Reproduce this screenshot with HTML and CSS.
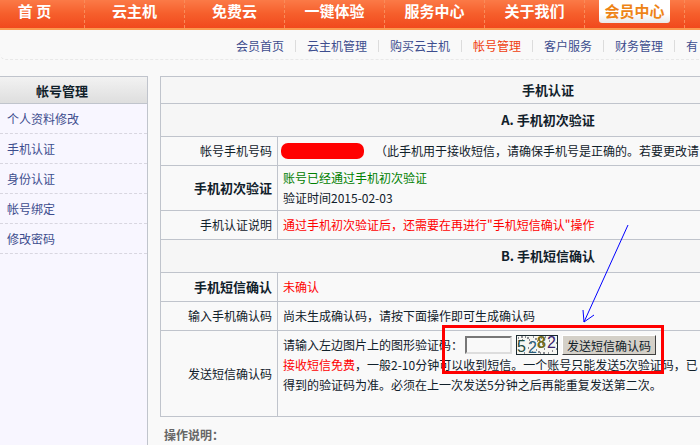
FILE: index.html
```html
<!DOCTYPE html>
<html lang="zh-CN">
<head>
<meta charset="utf-8">
<title>手机认证</title>
<link rel="stylesheet" href="styles.css">
</head>
<body>
<nav class="topnav">
  <a class="tn">首 页</a>
  <a class="tn">云主机</a>
  <a class="tn">免费云</a>
  <a class="tn">一键体验</a>
  <a class="tn">服务中心</a>
  <a class="tn">关于我们</a>
  <a class="tn active"><span>会员中心</span></a>
</nav>
<div class="subnav">
  <a>会员首页</a><a>云主机管理</a><a>购买云主机</a><a class="cur">帐号管理</a><a>客户服务</a><a>财务管理</a><a class="last">有</a>
</div>
<div class="page">
  <aside class="side">
    <h3>帐号管理</h3>
    <a>个人资料修改</a>
    <a>手机认证</a>
    <a>身份认证</a>
    <a>帐号绑定</a>
    <a>修改密码</a>
  </aside>
  <main class="main">
    <table class="tb">
      <colgroup><col class="c1"><col class="c2col"></colgroup>
      <tr class="h1"><th colspan="2">手机认证</th></tr>
      <tr class="h2"><th colspan="2">A. 手机初次验证</th></tr>
      <tr class="r29"><td class="l">帐号手机号码</td><td class="v"><span class="blob"></span><span class="note">（此手机用于接收短信，请确保手机号是正确的。若要更改请</span></td></tr>
      <tr><td class="l b">手机初次验证</td><td class="v two"><span class="green">账号已经通过手机初次验证</span><br>验证时间2015-02-03</td></tr>
      <tr class="r29"><td class="l">手机认证说明</td><td class="v red">通过手机初次验证后，还需要在再进行"手机短信确认"操作</td></tr>
      <tr class="h3"><th colspan="2">B. 手机短信确认</th></tr>
      <tr class="r29"><td class="l b">手机短信确认</td><td class="v red">未确认</td></tr>
      <tr class="r29"><td class="l">输入手机确认码</td><td class="v">尚未生成确认码，请按下面操作即可生成确认码</td></tr>
      <tr class="send"><td class="l">发送短信确认码</td><td class="v top">
        <div class="formline">请输入左边图片上的图形验证码：<input class="code" type="text"><svg class="captcha" width="42" height="20" viewBox="0 0 42 20"><rect x=".5" y=".5" width="41" height="19" fill="#f6f6f2" stroke="#1c2a30"/><path d="M2 3h1M6 5h1M9 2h1M13 5h1M17 2h1M21 6h1M25 3h1M29 2h1M33 6h1M37 3h1M40 8h1M3 16h1M8 18h1M12 13h1M16 17h1M20 15h1M24 18h1M28 14h1M32 18h1M36 16h1M40 14h1M2 9h1M15 8h1M26 9h1M11 3h2M19 4h2M5 2h2M22 17h2M27 18h2" stroke="#223" stroke-width="1"/><text class="d5" x="1" y="17">5</text><text class="d2" x="12" y="18">2</text><text class="d8" x="21" y="13">8</text><text class="d2b" x="31" y="13">2</text></svg><button class="sendbtn" type="button">发送短信确认码</button></div>
        <div class="tl"><span class="red">接收短信免费</span>，一般2-10分钟可以收到短信。一个账号只能发送5次验证码，已</div>
        <div class="tl">得到的验证码为准。必须在上一次发送5分钟之后再能重复发送第二次。</div>
      </td></tr>
    </table>
    <p class="help">操作说明：</p>
  </main>
</div>
<svg class="annot" width="700" height="445" viewBox="0 0 700 445">
  <path d="M628 225L584 322M584 322L583 310M584 322L594 315" fill="none" stroke="#0000ff" stroke-width="1"/>
  <rect x="443.500" y="326.500" width="219" height="46" fill="none" stroke="#ff0000" stroke-width="3"/>
</svg>
</body>
</html>
```
FILE: styles.css
```css
* { box-sizing: border-box; }
html, body { margin: 0; padding: 0; }
body {
  width: 700px; height: 445px; overflow: hidden; position: relative;
  background: #f9f9f9; color: #10202a;
  font: 12px/18px "Noto Sans CJK SC", "Liberation Sans", sans-serif;
}
.topnav {
  height: 30px; display: flex; margin-left: -15px;
  width: 715px; overflow: hidden;
  background: linear-gradient(#fb7a47 0, #f65f2c 45%, #f1491d 93%, #fb9a50 94%, #fb9a50 100%);
}
.tn {
  width: 100px; height: 28px; flex: none;
  color: #fff; font-size: 15px; font-weight: 700; line-height: 22px;
  text-align: center; border-right: 1px dashed #f98c5a;
}
.tn.active { display: flex; justify-content: center; align-items: flex-start; }
.tn.active span {
  display: block; width: 71px; height: 23px; color: #ee8416;
  background: linear-gradient(#fff 60%, #e9e9e9);
  border-radius: 0 0 3px 3px;
}
.subnav {
  height: 30px; padding-left: 225px; display: flex; align-items: center;
  border-bottom: 1px dashed #e8e8e8; border-bottom-left-radius: 6px;
  white-space: nowrap; padding-top: 2px;
}
.subnav a {
  flex: none; padding: 0 11px; color: #3d4d8e;
  line-height: 12px; border-right: 1px solid #dcdcdc;
  height: 12px;
}
.subnav a.cur { color: #f0400f; }
.subnav a.last { border-right: 0; }
.page { display: flex; align-items: flex-start; margin-top: 16px; }
.side {
  width: 148px; flex: none; background: #f8f6ff;
  border: 1px solid #c0c4cc; border-left: 0; border-bottom: 0;
  height: 369px;
}
.side h3 {
  margin: 0; height: 27px; line-height: 27px; font-size: 13px; font-weight: 700;
  text-align: center; color: #10202a; padding-right: 23px;
  background: linear-gradient(#f2f2f2, #dedede);
  border-bottom: 1px solid #c0c4cc;
}
.side a {
  display: block; height: 30px; line-height: 29px; padding-left: 7px;
  color: #3d4d8e; border-bottom: 1px dashed #d8d6e0;
}
.main { margin-left: 12px; flex: none; width: 775px; }
.tb { border-collapse: collapse; width: 775px; table-layout: fixed; }
.c1 { width: 117px; }
.c2col { width: 658px; }
.tb td, .tb th { border: 1px solid #c0c4cc; padding: 0; font-size: 12px; }
.tb td.l { text-align: right; padding-right: 5px; }
.tb td.b, .tb th { font-weight: 700; font-size: 13px; }
.tb td.v { padding-left: 5px; white-space: nowrap; overflow: hidden; }
.tb th {
  background: repeating-conic-gradient(#f2f2f2 0 25%, #fafafa 0 50%) 0 0 / 2px 2px;
  text-align: center;
}
.h1 th { height: 27px; }
.h2 th { height: 33px; }
.h3 th { height: 33px; }
.r29 td { height: 29px; }
.two { height: 45px; line-height: 20px; }
.send td { height: 86px; }
.tb td.top { vertical-align: top; padding-top: 4px; line-height: 20px; }
.red { color: #ff0000; }
.green { color: #008000; }
.blob {
  display: inline-block; width: 83px; height: 16px; vertical-align: -3px;
  background: #ff0000; border-radius: 7px; margin-left: -2px;
}
.note { margin-left: 11px; }
.formline { display: flex; align-items: center; height: 20px; }
.code {
  width: 47px; height: 18px; margin: 0 4px 0 2px; padding: 0; background: #f9f9f9;
  border: 2px solid; border-color: #777 #ddd #ddd #777;
}
.captcha { flex: none; }
.captcha text { font: 16px "Liberation Sans", sans-serif; }
.captcha .d5 { fill: #1f4a40; }
.captcha .d2 { fill: #2b5f7e; }
.captcha .d8 { fill: #6f6a1a; font-weight: 700; }
.captcha .d2b { fill: #3b2470; }
.sendbtn {
  margin: 0 0 0 4px; padding: 0; width: 94px; height: 20px; flex: none;
  font: 12px/15px "Noto Sans CJK SC", sans-serif;
  background: #d4d0c8; color: #10202a;
  border: 1px solid; border-color: #fff #404040 #404040 #fff;
}
.tl { height: 20px; }
.help { margin: 9px 0 0 4px; font-weight: 700; color: #666; }
.annot { position: absolute; left: 0; top: 0; pointer-events: none; }
```
